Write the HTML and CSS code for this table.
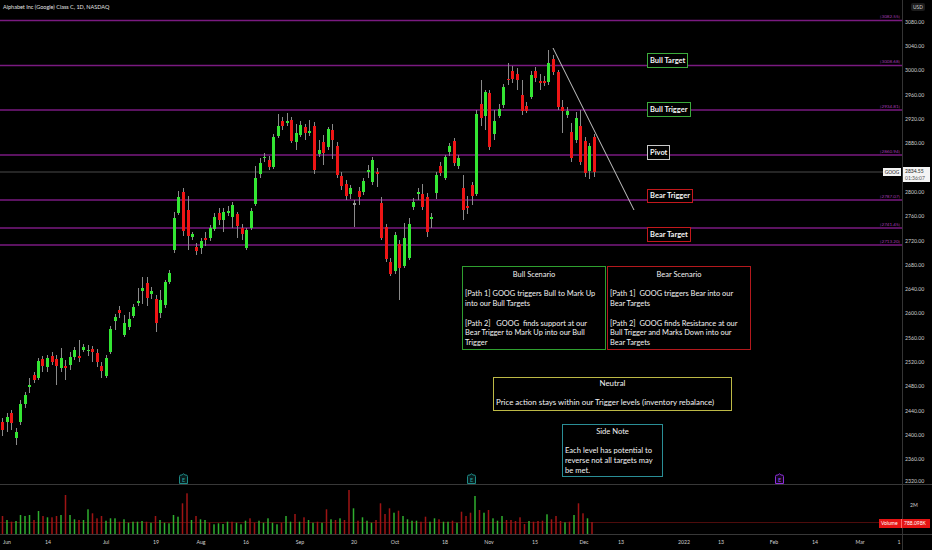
FILE: index.html
```html
<!DOCTYPE html>
<html lang="en">
<head>
<meta charset="utf-8">
<title>GOOG 1D</title>
<link rel="stylesheet" href="styles.css">
</head>
<body>
<div class="chart">
  <div class="price-pane">
    <svg class="plot" width="902" height="484" viewBox="0 0 902 484">
      <g class="levels">
        <line x1="0" x2="902" y1="20.5" y2="20.5"/>
        <line x1="0" x2="902" y1="65.5" y2="65.5"/>
        <line x1="0" x2="902" y1="110" y2="110"/>
        <line x1="0" x2="902" y1="155" y2="155"/>
        <line x1="0" x2="902" y1="200" y2="200"/>
        <line x1="0" x2="902" y1="228" y2="228"/>
        <line x1="0" x2="902" y1="245" y2="245"/>
      </g>
      <g class="level-labels">
        <text x="900" y="18">[3082.55]</text>
        <text x="900" y="63">[3008.68]</text>
        <text x="900" y="107.5">[2934.81]</text>
        <text x="900" y="152.5">[2860.94]</text>
        <text x="900" y="197.5">[2787.07]</text>
        <text x="900" y="225.5">[2741.45]</text>
        <text x="900" y="242.5">[2713.20]</text>
      </g>
      <line class="last-line" x1="0" x2="883" y1="172" y2="172"/>
      <g id="candles"></g>
      <line class="trend" x1="553" y1="48" x2="634" y2="210"/>
    </svg>

    <div class="legend">Alphabet Inc (Google) Class C, 1D, NASDAQ</div>

    <div class="level-tag bull t-bull-target">Bull Target</div>
    <div class="level-tag bull t-bull-trigger">Bull Trigger</div>
    <div class="level-tag pivot t-pivot">Pivot</div>
    <div class="level-tag bear t-bear-trigger">Bear Trigger</div>
    <div class="level-tag bear t-bear-target">Bear Target</div>

    <div class="scenarios">
      <div class="note note-bull">
        <p class="note-title">Bull Scenario</p>
        <p>&nbsp;</p>
        <p>[Path 1] GOOG triggers Bull to Mark Up</p>
        <p>into our Bull Targets</p>
        <p>&nbsp;</p>
        <p>[Path 2]&nbsp;&nbsp; GOOG&nbsp; finds support at our</p>
        <p>Bear Trigger to Mark Up into our Bull</p>
        <p>Trigger</p>
      </div>
      <div class="note note-bear">
        <p class="note-title">Bear Scenario</p>
        <p>&nbsp;</p>
        <p>[Path 1]&nbsp; GOOG triggers Bear into our</p>
        <p>Bear Targets</p>
        <p>&nbsp;</p>
        <p>[Path 2]&nbsp; GOOG finds Resistance at our</p>
        <p>Bull Trigger and Marks Down into our</p>
        <p>Bear Targets</p>
      </div>
    </div>

    <div class="note note-neutral">
      <p class="note-title">Neutral</p>
      <p>&nbsp;</p>
      <p>Price action stays within our Trigger levels (inventory rebalance)</p>
    </div>

    <div class="note note-side">
      <p class="note-title">Side Note</p>
      <p>&nbsp;</p>
      <p>Each level has potential to</p>
      <p>reverse not all targets may</p>
      <p>be met.</p>
    </div>

    <svg class="earn teal e1" width="9" height="11" viewBox="0 0 9 11"><path d="M0.5 10.5 V3.5 Q0.5 2 2 2 H3.2 L4.5 0.6 L5.8 2 H7 Q8.5 2 8.5 3.5 V10.5 Z"/><text x="4.5" y="8.7">E</text></svg>
    <svg class="earn teal e2" width="9" height="11" viewBox="0 0 9 11"><path d="M0.5 10.5 V3.5 Q0.5 2 2 2 H3.2 L4.5 0.6 L5.8 2 H7 Q8.5 2 8.5 3.5 V10.5 Z"/><text x="4.5" y="8.7">E</text></svg>
    <svg class="earn violet e3" width="9" height="11" viewBox="0 0 9 11"><path d="M0.5 10.5 V3.5 Q0.5 2 2 2 H3.2 L4.5 0.6 L5.8 2 H7 Q8.5 2 8.5 3.5 V10.5 Z"/><text x="4.5" y="8.7">E</text></svg>
  </div>

  <div class="price-axis">
    <span class="usd">USD</span>
    <ul class="ticks">
      <li>3080.00</li><li>3040.00</li><li>3000.00</li><li>2960.00</li><li>2920.00</li>
      <li>2880.00</li><li class="hidden-tick"></li><li>2800.00</li><li>2760.00</li><li>2720.00</li>
      <li>2680.00</li><li>2640.00</li><li>2600.00</li><li>2560.00</li><li>2520.00</li>
      <li>2480.00</li><li>2440.00</li><li>2400.00</li><li>2360.00</li><li class="edge-tick">2320.00</li>
    </ul>
  </div>

  <div class="vol-pane">
    <svg class="vol" width="902" height="49" viewBox="0 0 902 49">
      <line class="vol-last" x1="0" x2="902" y1="37.5" y2="37.5"/>
      <g id="volbars"></g>
    </svg>
  </div>
  <div class="vol-axis"><span>2M</span></div>

  <div class="time-axis">
    <span style="--x:7px">Jun</span>
    <span style="--x:48px">14</span>
    <span style="--x:106px">Jul</span>
    <span style="--x:156px">19</span>
    <span style="--x:201px">Aug</span>
    <span style="--x:246px">16</span>
    <span style="--x:300px">Sep</span>
    <span style="--x:354px">20</span>
    <span style="--x:395px">Oct</span>
    <span style="--x:445px">18</span>
    <span style="--x:489px">Nov</span>
    <span style="--x:535px">15</span>
    <span style="--x:584px">Dec</span>
    <span style="--x:621px">13</span>
    <span style="--x:684px">2022</span>
    <span style="--x:721px">13</span>
    <span style="--x:774px">Feb</span>
    <span style="--x:815px">14</span>
    <span style="--x:860px">Mar</span>
    <span style="--x:899px">1</span>
  </div>
  <div class="corner"></div>

  <span class="goog-tag">GOOG</span>
  <div class="last-price"><span>2834.55</span><span class="countdown">01:36:07</span></div>
  <div class="vol-badge"><span>Volume</span><span>788.098K</span></div>
</div>
<script src="script.js"></script>
</body>
</html>
```

FILE: styles.css
```css
* { box-sizing: border-box; margin: 0; padding: 0; }
html, body { background: #000; }
body {
  width: 932px;
  height: 550px;
  overflow: hidden;
  font-family: "Lato", "Liberation Sans", sans-serif;
  color: #d8d8d8;
}

.chart {
  position: relative;
  display: grid;
  grid-template-columns: 902px 30px;
  grid-template-rows: 484px 50px 16px;
  width: 932px;
  height: 550px;
}

/* ---------- price pane ---------- */
.price-pane { position: relative; overflow: hidden; }
.plot { display: block; }
.levels line { stroke: #7a1a80; stroke-width: 1.4; }
.level-labels text { font-family: "Lato", sans-serif; font-size: 4.6px; fill: #a33ab5; text-anchor: end; }
.last-line { stroke: #4a4a4a; stroke-width: 1; }
.trend { stroke: #c4c4c4; stroke-width: 1; }
.wick { stroke: #8a8a8a; stroke-width: 1; }
.up { fill: #33e633; }
.down { fill: #ee1515; }
.doji { fill: #9a9a9a; }

.legend {
  position: absolute;
  left: 3px;
  top: 4px;
  font-size: 5.5px;
  color: #e2e2e2;
  white-space: nowrap;
}

.level-tag {
  position: absolute;
  left: 647px;
  height: 15px;
  padding: 0 2px;
  border: 1px solid;
  background: #000;
  color: #f4f4f4;
  font-size: 7.5px;
  font-weight: 700;
  line-height: 13px;
  white-space: nowrap;
}
.level-tag.bull { border-color: #3bab3b; }
.level-tag.pivot { border-color: #c8c8c8; }
.level-tag.bear { border-color: #c3181c; }
.t-bull-target { top: 53px; }
.t-bull-trigger { top: 102px; }
.t-pivot { top: 145px; }
.t-bear-trigger { top: 189px; height: 14px; line-height: 12px; }
.t-bear-target { top: 227px; }

.scenarios {
  position: absolute;
  left: 462px;
  top: 266px;
  display: flex;
  gap: 1px;
}
.note {
  border: 1px solid;
  background: #000;
  color: #f2f2f2;
  font-size: 7.45px;
  line-height: 9.7px;
  white-space: nowrap;
  padding: 3px 2px 1px 2px;
}
.note p { white-space: nowrap; }
.note .note-title { text-align: center; }
.note-bull { width: 144px; height: 84px; border-color: #2f9f2f; }
.note-bear { width: 144px; height: 84px; border-color: #b3191d; }
.note-neutral {
  position: absolute;
  left: 493px;
  top: 377px;
  width: 239px;
  height: 34px;
  padding-top: 1px;
  font-size: 7.9px;
  border-color: #bdb946;
}
.note-side {
  position: absolute;
  left: 562px;
  top: 424px;
  width: 101px;
  height: 53px;
  padding-top: 2px;
  font-size: 7.6px;
  border-color: #2a8e96;
}

.earn { position: absolute; top: 473px; }
.earn path { stroke-width: 1; }
.earn text { font-family: "Lato", sans-serif; font-size: 5.5px; text-anchor: middle; }
.earn.teal path { fill: #071c1c; stroke: #1e8a86; }
.earn.teal text { fill: #2ba39e; }
.earn.violet path { fill: #14061e; stroke: #8d2fd8; }
.earn.violet text { fill: #a24ef0; }
.e1 { left: 179px; }
.e2 { left: 467px; }
.e3 { left: 775px; }

/* ---------- price axis ---------- */
.price-axis {
  position: relative;
  border-left: 1px solid #343434;
}
.usd {
  position: absolute;
  left: 8px;
  top: 3px;
  padding: 1px 2px;
  border-radius: 2px;
  background: #1c1c1c;
  font-size: 4.8px;
  line-height: 6px;
  color: #d0d0d0;
}
.ticks { list-style: none; padding-top: 9.85px; }
.ticks li {
  height: 24.3px;
  line-height: 24.3px;
  padding-left: 2px;
  font-size: 5.2px;
  color: #cfcfcf;
  white-space: nowrap;
}
.ticks .edge-tick { height: 10px; line-height: 20px; }

/* ---------- volume pane ---------- */
.vol-pane { position: relative; overflow: hidden; border-top: 1px solid #383838; }
.vol { display: block; }
.vol-last { stroke: #4e0c0c; stroke-width: 1; }
.vup { fill: #2fae2f; }
.vdown { fill: #9e1414; }
.vol-axis {
  border-top: 1px solid #383838;
  border-left: 1px solid #343434;
  padding: 17px 0 0 7px;
  font-size: 5.2px;
  line-height: 6px;
  color: #cfcfcf;
}

/* ---------- time axis ---------- */
.time-axis {
  position: relative;
  overflow: hidden;
  border-top: 1px solid #383838;
}
.time-axis span {
  position: absolute;
  left: var(--x);
  top: 4px;
  transform: translateX(-50%);
  font-size: 5.2px;
  line-height: 7px;
  color: #d0d0d0;
  white-space: nowrap;
}
.corner { border-top: 1px solid #383838; border-left: 1px solid #343434; }

/* ---------- overlay tags ---------- */
.goog-tag {
  position: absolute;
  left: 883px;
  top: 168px;
  width: 18px;
  height: 8px;
  background: #f2f2f2;
  color: #222;
  font-size: 4.8px;
  line-height: 8px;
  text-align: center;
}
.last-price {
  position: absolute;
  left: 903px;
  top: 167px;
  width: 27px;
  height: 15px;
  padding: 1px 0 0 2px;
  background: #f4f4f4;
  color: #222;
  font-size: 5px;
  line-height: 6.5px;
  display: flex;
  flex-direction: column;
}
.last-price .countdown { color: #555; }
.vol-badge {
  position: absolute;
  left: 879px;
  top: 519px;
  width: 51px;
  height: 9px;
  display: flex;
  background: #e51414;
  color: #fff;
  font-size: 5px;
  line-height: 9px;
}
.vol-badge span:first-child { width: 23px; padding-left: 2px; border-right: 1px solid #ff6a6a; }
.vol-badge span:last-child { padding-left: 2px; }
```

FILE: script.js
```js
(function () {
  var NS = 'http://www.w3.org/2000/svg';
  // [x, bodyTop, bodyBottom, colour, high, low] in chart pixels
  var C = [
    [2,422,430,'r',418,436],[7,417,422,'g',413,432],[11,413,423,'r',410,430],[16,432,438,'g',428,445],
    [20,404,422,'g',400,425],[25,395,404,'g',392,408],[29,385,387,'g',378,393],[34,375,380,'r',372,383],
    [38,361,378,'g',358,380],[42,359,366,'r',356,372],[47,358,367,'g',355,372],[52,356,362,'r',352,365],
    [56,359,366,'r',355,385],[61,358,368,'g',348,372],[65,366,368,'r',360,380],[70,357,365,'g',352,370],
    [74,350,357,'g',347,360],[79,356,358,'r',340,362],[83,347,350,'g',344,352],[88,350,351,'g',345,356],
    [92,349,352,'r',346,362],[97,353,362,'r',349,367],[101,366,371,'r',362,378],[106,358,376,'g',355,378],
    [110,329,352,'g',326,354],[115,317,321,'g',314,330],[119,310,313,'r',306,318],[124,323,335,'g',315,337],
    [129,319,327,'g',312,330],[133,307,316,'g',304,318],[138,301,303,'g',288,306],[142,288,291,'g',277,304],
    [147,283,298,'r',277,306],[151,291,294,'g',287,299],[156,299,323,'r',295,332],[160,300,313,'g',290,318],
    [165,282,305,'g',280,308],[169,273,282,'g',270,284],[174,218,250,'g',212,253],[178,197,213,'g',191,215],
    [183,192,231,'r',188,236],[188,210,236,'r',196,250],[192,234,237,'g',232,240],[196,247,251,'r',243,255],
    [201,241,248,'g',238,254],[205,238,240,'r',232,246],[210,228,238,'g',225,241],[214,217,229,'g',213,231],
    [219,213,220,'r',208,225],[223,212,220,'g',208,232],[228,211,213,'g',206,216],[232,205,217,'g',202,228],
    [237,214,226,'r',212,238],[242,228,234,'r',224,240],[246,230,248,'g',228,250],[251,211,228,'g',208,230],
    [255,178,204,'g',166,206],[260,163,174,'g',158,178],[264,157,158,'g',153,162],[269,160,167,'r',156,170],
    [273,137,167,'g',134,169],[278,126,136,'g',114,138],[282,121,126,'r',117,130],[287,121,123,'g',113,126],
    [291,120,141,'r',117,143],[296,133,142,'g',124,150],[300,125,135,'g',121,137],[305,127,133,'r',124,140],
    [309,131,133,'g',120,136],[314,126,170,'r',122,174],[319,150,154,'g',140,157],[323,142,153,'r',135,165],
    [328,129,147,'g',127,150],[332,130,140,'r',124,159],[337,146,175,'r',142,178],[341,176,186,'r',172,190],
    [346,184,196,'r',180,200],[350,188,194,'g',185,199],[354,203,205,'d',200,227],[359,191,197,'r',187,205],
    [363,181,192,'g',178,195],[368,170,172,'g',165,178],[372,160,182,'g',157,185],[377,172,174,'r',168,187],
    [381,203,238,'r',197,240],[386,227,259,'r',224,262],[390,262,274,'r',258,276],[395,235,271,'g',232,274],
    [399,244,268,'r',240,300],[404,238,266,'g',223,268],[409,224,258,'g',218,260],[413,202,207,'g',198,210],
    [418,192,194,'g',188,200],[422,194,207,'r',184,210],[427,197,232,'r',193,237],[431,217,219,'g',213,228],
    [436,175,193,'g',172,199],[440,166,173,'r',162,176],[445,157,178,'g',155,180],[449,146,152,'g',143,156],
    [454,141,163,'r',138,166],[458,158,166,'g',155,169],[463,188,210,'r',175,220],[467,206,208,'r',196,214],
    [472,185,196,'r',182,205],[476,114,194,'g',110,196],[481,104,118,'r',80,126],[485,92,116,'g',90,130],
    [489,93,147,'r',90,150],[494,121,134,'g',110,140],[499,109,116,'g',104,118],[503,87,105,'g',84,108],
    [508,79,80,'r',63,85],[512,71,79,'r',66,83],[517,74,80,'r',68,90],[522,95,111,'r',80,115],
    [526,106,111,'r',102,113],[531,75,97,'g',71,99],[535,71,78,'r',67,82],[540,81,83,'r',74,90],
    [544,81,83,'r',76,86],[548,63,82,'g',50,85],[553,59,72,'r',55,75],[558,72,107,'r',70,110],
    [562,107,111,'r',100,133],[567,111,115,'g',107,118],[571,132,158,'r',123,162],[576,118,140,'g',112,143],
    [580,126,162,'r',110,165],[585,141,173,'r',137,177],[589,146,171,'g',143,179],[594,137,172,'r',134,177]
  ];
  var g = document.getElementById('candles');
  C.forEach(function (c) {
    var x = c[0];
    var w = document.createElementNS(NS, 'line');
    w.setAttribute('x1', x + 0.5); w.setAttribute('x2', x + 0.5);
    w.setAttribute('y1', c[4]); w.setAttribute('y2', c[5]);
    w.setAttribute('class', 'wick');
    g.appendChild(w);
    var r = document.createElementNS(NS, 'rect');
    r.setAttribute('x', x - 1); r.setAttribute('y', c[1]);
    r.setAttribute('width', 3); r.setAttribute('height', Math.max(c[2] - c[1], 1));
    r.setAttribute('class', c[3] === 'g' ? 'up' : (c[3] === 'r' ? 'down' : 'doji'));
    g.appendChild(r);
  });

  var V = ('18r 14g 12.3r 13g 19g 18g 19g 14r 23g 18r ' +
    '16.7g 16.7r 18r 19g 39r 19g 14.7g 14r 14g 24.7g ' +
    '20.7r 15.7r 18r 13.3g 15.7g 15.7g 12.3r 14.7g 11.3g 12.3g ' +
    '12.3g 13g 12.3r 11.3g 18r 14g 11.3g 10.7g 19g 17.3g ' +
    '30.7r 40.7r 14g 18r 14.7g 14g 11.3r 9.7g 10.7g 10g ' +
    '12.3g 12.3r 11.3g 9.7g 13.3g 15.7r 11.3r 13.3g 11.3g 15.7g ' +
    '11.3g 9.7g 11.3r 18g 12.3g 20r 12.3g 16.7r 14g 11.3g ' +
    '12.3r 11.3g 24.7r 14.7g 14r 15.7g 14r 44r 25.7g 13.3r ' +
    '16.7g 13.3g 11.3g 14r 30.7r 20r 25.7r 21.3g 23.3r 18g ' +
    '14.7g 13.3g 13.3g 12.3r 17.3r 12.3g 15.7g 14.7r 12.3g 12.3g ' +
    '13.3r 11.3g 22.3r 18r ' +
    '21.3r 38g 24r 21.3g 24r 15.7g 13.3g 18g 14r 14r 13r 16.7r 10r 13g 12.3r 13r 13.3r ' +
    '19.7g 14.7r 18r 13r 11.7g 12.3r 19g 30.7r 20.7r 15.7g 12r').split(' ');
  var vg = document.getElementById('volbars');
  V.forEach(function (s, i) {
    var h = parseFloat(s);
    var k = s.charAt(s.length - 1);
    var x = 2.5 + 4.5 * i;
    var r = document.createElementNS(NS, 'rect');
    r.setAttribute('x', x - 0.75); r.setAttribute('y', 49 - h);
    r.setAttribute('width', 1.5); r.setAttribute('height', h);
    r.setAttribute('class', k === 'g' ? 'vup' : 'vdown');
    vg.appendChild(r);
  });
})();
```
